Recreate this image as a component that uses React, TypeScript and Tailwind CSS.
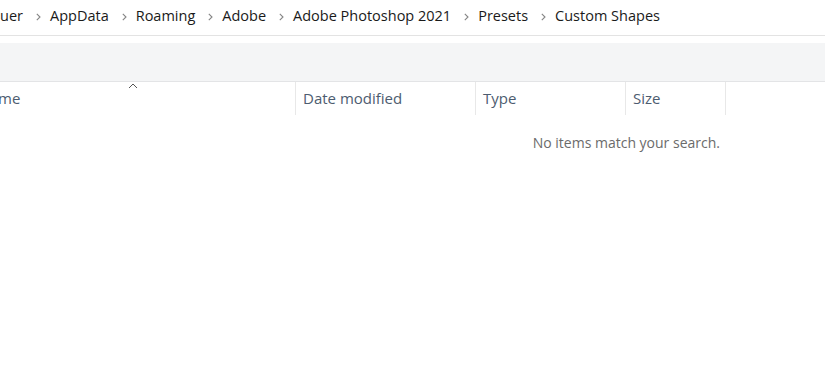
import React from "react";

const Chevron = () => (
  <svg width="5" height="8" viewBox="0 0 5 8" className="shrink-0 ml-[13px] mr-[9px] mt-[1px]">
    <path d="M0.8 0.8 L4 4 L0.8 7.2" fill="none" stroke="#858585" strokeWidth="1.1" />
  </svg>
);

const crumbs = ["uer", "AppData", "Roaming", "Adobe", "Adobe Photoshop 2021", "Presets", "Custom Shapes"];

export default function App() {
  return (
    <div
      className="w-[825px] h-[371px] bg-white overflow-hidden relative"
      style={{ fontFamily: '"Open Sans", "Noto Sans", sans-serif' }}
    >
      <div className="h-[36px] border-b border-[#e3e3e3] flex items-center pb-[3px] text-[14.5px] text-[#1a1a1a] whitespace-nowrap">
        {crumbs.map((c, i) => (
          <React.Fragment key={c}>
            {i > 0 && <Chevron />}
            <span>{c}</span>
          </React.Fragment>
        ))}
      </div>
      <div className="h-[7px]" />
      <div className="h-[39px] bg-[#f4f5f6] border-b border-[#e3e4e6]" />
      <div className="h-[33px] flex text-[15px] text-[#4d5c70] relative">
        <div className="w-[296px] border-r border-[#e8e8e8] flex items-center pb-[1px] relative">
          <span className="-ml-[2px]">me</span>
          <svg className="absolute left-[128px] top-[1px]" width="10" height="6" viewBox="0 0 10 6">
            <path d="M1 5 L5 1 L9 5" fill="none" stroke="#555" strokeWidth="1" />
          </svg>
        </div>
        <div className="w-[180px] border-r border-[#e8e8e8] flex items-center pl-[7px] pb-[1px]">Date modified</div>
        <div className="w-[150px] border-r border-[#e8e8e8] flex items-center pl-[7px] pb-[1px]">Type</div>
        <div className="w-[100px] border-r border-[#e8e8e8] flex items-center pl-[7px] pb-[1px]">Size</div>
      </div>
      <div className="w-[726px] flex justify-end pr-[6px] pt-[17px] text-[14px] text-[#6b6b6b]">
        No items match your search.
      </div>
    </div>
  );
}
